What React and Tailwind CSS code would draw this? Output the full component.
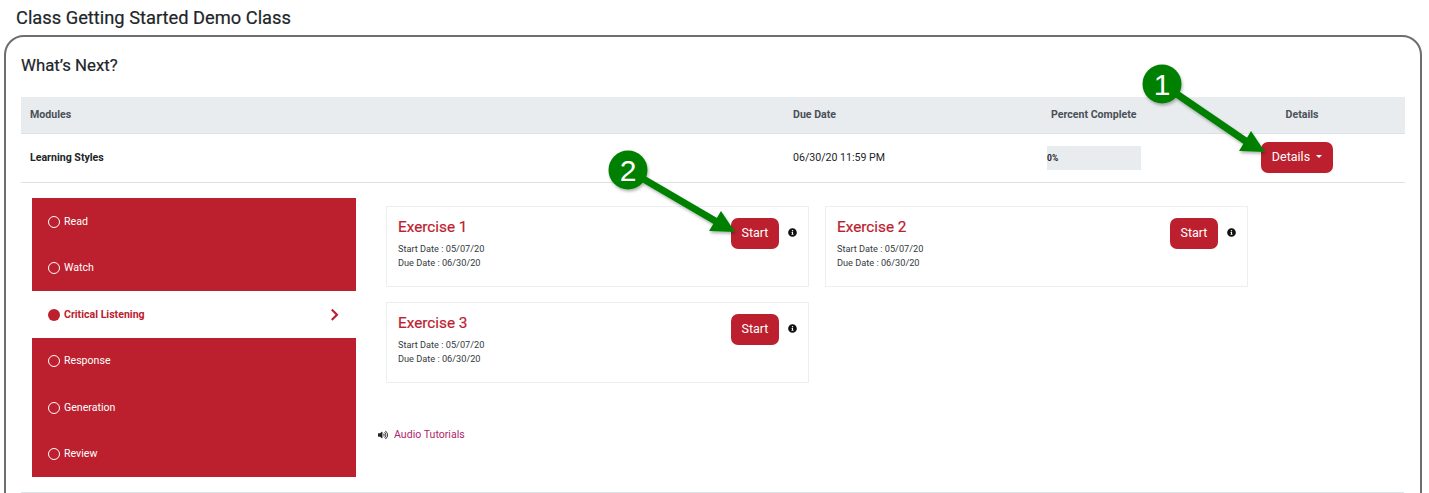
import React from "react";
import { FaInfoCircle, FaChevronRight, FaVolumeUp } from "react-icons/fa";

const MENU = [
  { label: "Read" },
  { label: "Watch" },
  { label: "Critical Listening", active: true },
  { label: "Response" },
  { label: "Generation" },
  { label: "Review" },
];

const ExerciseCard = ({ title }) => (
  <div className="w-[423px] h-[81px] border border-[#eeeeee] bg-white pl-[11px] pt-[10px] pr-[10px] flex justify-between">
    <div>
      <div className="text-[15.3px] leading-[20px] text-[#bc202e] [-webkit-text-stroke:0.2px]">{title}</div>
      <div className="mt-[5px] text-[9.2px] leading-[14px] text-[#343a40]">Start Date : 05/07/20</div>
      <div className="text-[9.2px] leading-[14px] text-[#343a40]">Due Date : 06/30/20</div>
    </div>
    <div className="flex items-start">
      <button className="w-[48px] h-[31px] mt-[1px] rounded-[7px] bg-[#bc202e] text-white text-[12.5px]">Start</button>
      <FaInfoCircle className="ml-[9px] mt-[11px] mr-[1px] text-[9px] text-[#111111]" />
    </div>
  </div>
);

// green callout: numbered circle with a line arrow
const Callout = ({ n, className, x2, y2 }) => (
  <svg className={`absolute ${className}`} width="170" height="110" viewBox="0 0 170 110">
    <defs>
      <filter id={`shadow${n}`} x="-20%" y="-20%" width="140%" height="140%">
        <feDropShadow dx="1" dy="2" stdDeviation="1.5" floodColor="#000000" floodOpacity="0.3" />
      </filter>
    </defs>
    <g filter={`url(#shadow${n})`}>
      <line x1="20" y1="20" x2={x2 - 18} y2={y2 - 10} stroke="#008000" strokeWidth="7" />
      <polygon points={`${x2},${y2} ${x2 - 26},${y2 - 1} ${x2 - 14},${y2 - 21}`} fill="#008000" />
      <circle cx="20" cy="20" r="19.5" fill="#008000" />
    </g>
    <text x="20" y="30.5" textAnchor="middle" fontSize="30" fill="#ffffff" fontFamily="'Liberation Sans', sans-serif">
      {n}
    </text>
  </svg>
);

export default function App() {
  return (
    <div className="relative w-[1429px] h-[493px] overflow-hidden bg-white font-['Roboto',sans-serif] text-[#212529]">
      {/* Page title */}
      <h1 className="pl-[16px] pt-[8px] h-[35px] text-[18.3px] leading-[20px] font-normal [-webkit-text-stroke:0.2px]">Class Getting Started Demo Class</h1>

      {/* Card */}
      <div className="ml-[4px] w-[1418px] h-[500px] border-2 border-[#6e6e6e] rounded-[20px] px-[15px]">
        <h2 className="pt-[18px] h-[60px] text-[16.8px] leading-[20px] font-normal [-webkit-text-stroke:0.2px]">What’s Next?</h2>

        {/* Table header */}
        <div className="flex items-center h-[37px] bg-[#e9ecef] border-b border-[#dee2e6] text-[10.6px] font-bold text-[#495057]">
          <div className="w-[772px] pl-[9px]">Modules</div>
          <div className="w-[258px]">Due Date</div>
          <div className="w-[189px]">Percent Complete</div>
          <div className="w-[124px] text-center">Details</div>
        </div>

        {/* Table row */}
        <div className="flex items-center h-[49px] border-b border-[#dee2e6] text-[10.6px]">
          <div className="w-[772px] pl-[9px] font-bold">Learning Styles</div>
          <div className="w-[254px]">06/30/20 11:59 PM</div>
          <div className="w-[214px]">
            <div className="w-[94px] h-[24px] bg-[#e9ecef] text-[8.5px] leading-[24px] font-bold">0%</div>
          </div>
          <button className="w-[72px] h-[31px] mb-[2px] rounded-[7px] bg-[#bc202e] text-white text-[12.5px] flex items-center justify-center gap-[6px]">
            Details
            <span className="border-x-[3.5px] border-x-transparent border-t-[3.5px] border-t-white mb-[1px]" />
          </button>
        </div>

        {/* Lower part */}
        <div className="flex pt-[15px] pl-[11px]">
          <div className="w-[324px] h-[279px] bg-[#bc202e] text-[10.6px]">
            {MENU.map((item) => (
              <div
                key={item.label}
                className={`h-[46.5px] pl-[16px] pr-[15px] pt-[1px] flex items-center ${
                  item.active ? "bg-white text-[#bc202e] font-bold" : "text-white"
                }`}
              >
                <span
                  className={`w-[12px] h-[12px] rounded-full mr-[4px] ${
                    item.active ? "bg-[#bc202e]" : "border-[1.5px] border-white"
                  }`}
                />
                <span className="flex-1">{item.label}</span>
                {item.active && <FaChevronRight className="text-[13.5px] text-[#bc202e]" />}
              </div>
            ))}
          </div>

          <div className="ml-[22px] relative">
            <div className="ml-[8px] mt-[8px] flex flex-wrap gap-x-[16px] gap-y-[15px] w-[863px]">
              <ExerciseCard title="Exercise 1" />
              <ExerciseCard title="Exercise 2" />
              <ExerciseCard title="Exercise 3" />
            </div>
            <div className="mt-[44px] flex items-center text-[10.6px] text-[#b0256a]">
              <FaVolumeUp className="text-[10px] text-[#222222] mr-[6px]" />
              Audio Tutorials
            </div>
          </div>
        </div>
      </div>

      {/* Rule near the bottom of the card */}
      <div className="absolute left-[21px] top-[492px] w-[1383px] h-[1px] bg-[#dee2e6]" />

      {/* Callouts */}
      <Callout n="1" className="left-[1142px] top-[64px]" x2={123} y2={88} />
      <Callout n="2" className="left-[608px] top-[150px]" x2={127} y2={82} />
    </div>
  );
}
